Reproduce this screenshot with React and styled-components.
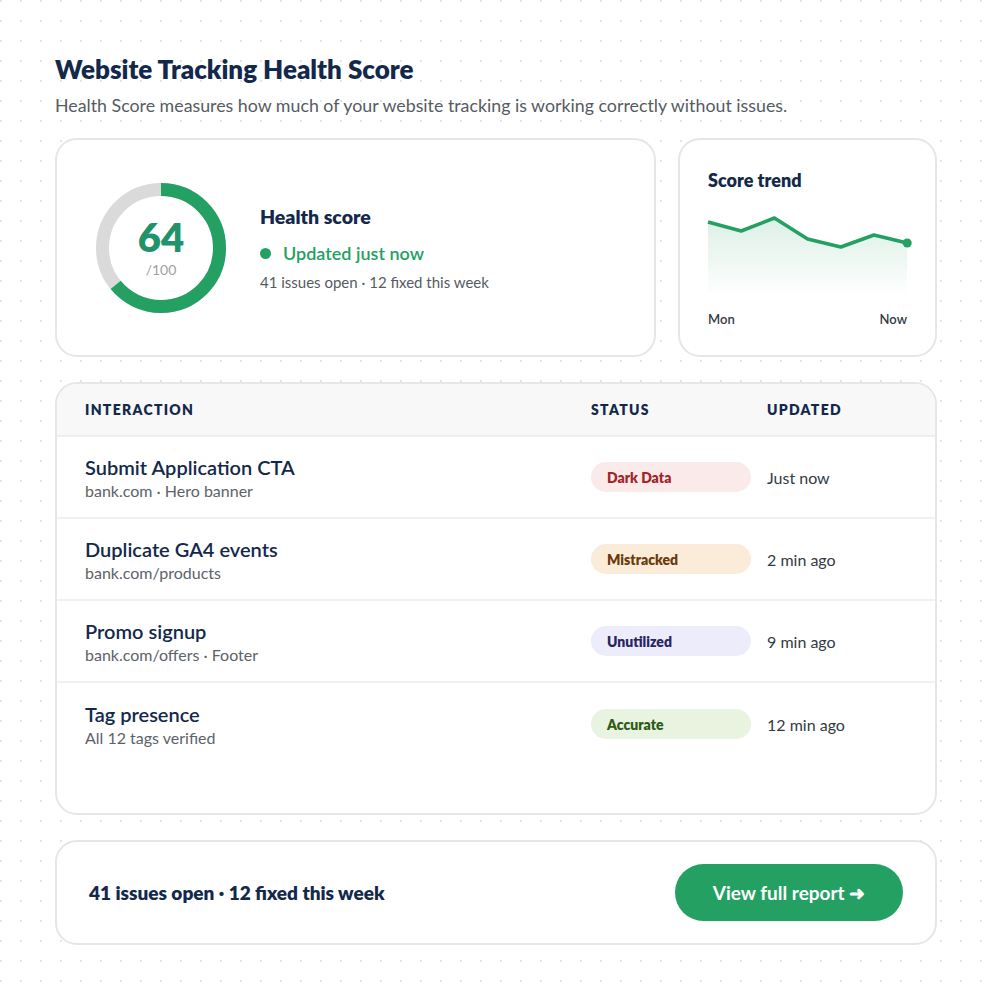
import React from "react";
import styled, { createGlobalStyle } from "styled-components";

const GlobalStyle = createGlobalStyle`
  * { box-sizing: border-box; }
  body {
    margin: 0;
    font-family: "Lato", "Noto Sans", sans-serif;
    background-color: #ffffff;
    background-image: radial-gradient(circle, #e4e4e4 1px, transparent 1.4px);
    background-size: 20px 20px;
    background-position: -9px -9px;
    color: #13294b;
  }
`;

const navy = "#13294b";
const green = "#23a062";

const trend = [221, 230, 217, 238, 246, 234, 242];

const rows = [
  { title: "Submit Application CTA", sub: "bank.com · Hero banner", status: "Dark Data", kind: "dark", time: "Just now" },
  { title: "Duplicate GA4 events", sub: "bank.com/products", status: "Mistracked", kind: "mis", time: "2 min ago" },
  { title: "Promo signup", sub: "bank.com/offers · Footer", status: "Unutilized", kind: "unused", time: "9 min ago" },
  { title: "Tag presence", sub: "All 12 tags verified", status: "Accurate", kind: "ok", time: "12 min ago" },
];

const pillColors = {
  dark: { bg: "#fbeaea", fg: "#a3262a" },
  mis: { bg: "#faecd9", fg: "#6b3a0a" },
  unused: { bg: "#ececfb", fg: "#2a2560" },
  ok: { bg: "#e8f3e0", fg: "#2d5a17" },
};

const Donut = ({ value }) => {
  const r = 58.5;
  const c = 2 * Math.PI * r;
  return (
    <DonutWrap>
      <svg width="130" height="130" viewBox="0 0 130 130">
        <circle cx="65" cy="65" r={r} fill="none" stroke="#dadada" strokeWidth="13" />
        <circle
          cx="65"
          cy="65"
          r={r}
          fill="none"
          stroke={green}
          strokeWidth="13"
          strokeDasharray={`${(c * value) / 100} ${c}`}
          transform="rotate(-90 65 65)"
        />
      </svg>
      <DonutText>
        <strong>{value}</strong>
        <span>/100</span>
      </DonutText>
    </DonutWrap>
  );
};

const TrendChart = () => {
  const xs = trend.map((_, i) => i * 33.2);
  const pts = trend.map((y, i) => `${xs[i]},${y - 212}`).join(" ");
  return (
    <svg width="200" height="84" viewBox="0 0 200 84" style={{ overflow: "visible" }}>
      <defs>
        <linearGradient id="fade" x1="0" y1="0" x2="0" y2="1">
          <stop offset="0" stopColor={green} stopOpacity="0.16" />
          <stop offset="1" stopColor={green} stopOpacity="0" />
        </linearGradient>
      </defs>
      <polygon points={`0,84 ${pts} 199,84`} fill="url(#fade)" />
      <polyline points={pts} fill="none" stroke={green} strokeWidth="3.5" strokeLinejoin="round" />
      <circle cx={xs[6]} cy={trend[6] - 212} r="4.5" fill={green} />
    </svg>
  );
};

export default function App() {
  return (
    <>
      <GlobalStyle />
      <Page>
        <Header>
          <h1>Website Tracking Health Score</h1>
          <p>Health Score measures how much of your website tracking is working correctly without issues.</p>
        </Header>

        <TopRow>
          <Card>
            <ScoreBody>
              <Donut value={64} />
              <ScoreInfo>
                <h2>Health score</h2>
                <Live>Updated just now</Live>
                <Muted>41 issues open · 12 fixed this week</Muted>
              </ScoreInfo>
            </ScoreBody>
          </Card>
          <Card>
            <TrendBody>
              <h3>Score trend</h3>
              <TrendChart />
              <Axis>
                <span>Mon</span>
                <span>Now</span>
              </Axis>
            </TrendBody>
          </Card>
        </TopRow>

        <TableCard>
          <HeadRow>
            <span>Interaction</span>
            <span>Status</span>
            <span>Updated</span>
          </HeadRow>
          {rows.map((r) => (
            <Row key={r.title}>
              <div>
                <RowTitle>{r.title}</RowTitle>
                <RowSub>{r.sub}</RowSub>
              </div>
              <Pill kind={r.kind}>{r.status}</Pill>
              <Time>{r.time}</Time>
            </Row>
          ))}
        </TableCard>

        <Footer>
          <span>41 issues open · 12 fixed this week</span>
          <Button>View full report ➜</Button>
        </Footer>
      </Page>
    </>
  );
}

const Page = styled.div`
  padding: 53px 55px 46px;
  display: flex;
  flex-direction: column;
  gap: 25px;
`;

const Header = styled.header`
  margin-bottom: -3px;
  h1 {
    margin: 0 0 9px;
    font-size: 26px;
    font-weight: 800;
    color: ${navy};
  }
  p {
    margin: 0;
    font-size: 17.8px;
    color: #555b63;
    font-weight: 400;
  }
`;

const TopRow = styled.div`
  display: grid;
  grid-template-columns: 1fr 259px;
  gap: 22px;
`;

const Card = styled.section`
  background: #fff;
  border: 2px solid #e6e6e6;
  border-radius: 22px;
`;

const ScoreBody = styled.div`
  height: 215px;
  display: flex;
  align-items: center;
  padding: 0 39px;
  gap: 34px;
`;

const DonutWrap = styled.div`
  position: relative;
  width: 130px;
  height: 130px;
  svg { display: block; }
`;

const DonutText = styled.div`
  position: absolute;
  inset: 0;
  display: flex;
  flex-direction: column;
  align-items: center;
  justify-content: center;
  strong {
    font-size: 40px;
    font-weight: 800;
    color: #21936b;
    line-height: 1;
  }
  span {
    margin-top: 4px;
    font-size: 14px;
    color: #a0a0a0;
  }
`;

const ScoreInfo = styled.div`
  margin-top: 1px;
  h2 {
    margin: 0 0 14px;
    font-size: 19.5px;
    font-weight: 800;
    color: ${navy};
  }
`;

const Live = styled.div`
  display: flex;
  align-items: center;
  gap: 12px;
  font-size: 18px;
  font-weight: 600;
  color: ${green};
  &::before {
    content: "";
    width: 11px;
    height: 11px;
    border-radius: 50%;
    background: ${green};
  }
`;

const Muted = styled.div`
  margin-top: 9px;
  font-size: 15px;
  color: #555b63;
`;

const TrendBody = styled.div`
  height: 215px;
  padding: 29px 28px 0 28px;
  h3 {
    margin: 0 0 22px;
    font-size: 18px;
    font-weight: 800;
    color: ${navy};
  }
  svg { display: block; }
`;

const Axis = styled.div`
  display: flex;
  justify-content: space-between;
  margin-top: 14px;
  font-size: 13px;
  color: #333a44;
  font-weight: 600;
`;

const TableCard = styled(Card)`
  height: 433px;
  overflow: hidden;
`;

const cols = `
  display: grid;
  grid-template-columns: 1fr 176px 140px;
  align-items: center;
  padding: 0 28px;
`;

const HeadRow = styled.div`
  ${cols}
  height: 53px;
  background: #f8f8f8;
  border-bottom: 2px solid #eeeeee;
  span {
    font-size: 14px;
    font-weight: 800;
    letter-spacing: 1.3px;
    text-transform: uppercase;
    color: ${navy};
  }
`;

const Row = styled.div`
  ${cols}
  height: 82px;
  border-bottom: 2px solid #f1f1f1;
  &:last-child { border-bottom: none; }
`;

const RowTitle = styled.div`
  font-size: 20px;
  font-weight: 600;
  color: ${navy};
`;

const RowSub = styled.div`
  margin-top: 2px;
  font-size: 16px;
  color: #5c626a;
`;

const Pill = styled.span`
  width: 160px;
  height: 30px;
  border-radius: 15px;
  display: flex;
  align-items: center;
  padding: 0 16px;
  font-size: 14px;
  font-weight: 800;
  background: ${(p) => pillColors[p.kind].bg};
  color: ${(p) => pillColors[p.kind].fg};
`;

const Time = styled.span`
  font-size: 16px;
  color: #333a44;
`;

const Footer = styled(Card)`
  height: 105px;
  display: flex;
  align-items: center;
  justify-content: space-between;
  padding: 0 32px 0 32px;
  span {
    font-size: 19px;
    font-weight: 800;
    color: ${navy};
  }
`;

const Button = styled.button`
  width: 228px;
  height: 57px;
  border: none;
  border-radius: 29px;
  background: ${green};
  color: #fff;
  font-family: inherit;
  font-size: 19px;
  font-weight: 700;
  cursor: pointer;
`;
